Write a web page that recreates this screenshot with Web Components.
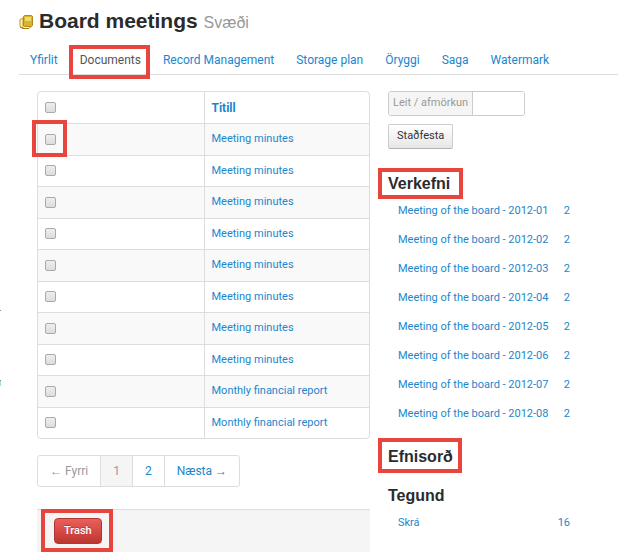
<!DOCTYPE html>
<html lang="is">
<head>
<meta charset="utf-8">
<title>Board meetings</title>
<style>
    body {
        margin: 0;
        background: #fff;
        color: #333;
        font: 11px/18px Roboto, "Liberation Sans", sans-serif;
        --link: #1c86cc;
        --line: #ddd;
        --mark: #e9453f;
        --heading: "Liberation Sans", Arial, sans-serif;
    }
</style>
</head>
<body>
<area-page>
    <page-heading slot="heading" kind="Svæði">Board meetings</page-heading>
    <tab-bar slot="tabs"></tab-bar>
    <document-table></document-table>
    <page-nav></page-nav>
    <action-bar></action-bar>
    <filter-form slot="side"></filter-form>
    <facet-list slot="side" id="tasks"><mark-box>Verkefni</mark-box></facet-list>
    <facet-list slot="side" id="keywords"><mark-box>Efnisorð</mark-box></facet-list>
    <facet-list slot="side" id="types">Tegund</facet-list>
</area-page>

<style>
    #tasks mark-box {
        --reach: -6px -13px -5px -10px;
    }
    #keywords mark-box {
        --reach: -9px -9px -6px -10px;
    }
</style>

<script>
/*
    Page frame: heading, tabs, main column and side column
 */
class AreaPage extends HTMLElement {
    constructor() {
        super();
        this.attachShadow({mode: "open"});
        this.shadowRoot.innerHTML = `
            <header>
                <slot name="heading"></slot>
                <slot name="tabs"></slot>
            </header>
            <div class="columns">
                <main><slot></slot></main>
                <aside><slot name="side"></slot></aside>
            </div>
            <div class="rail"><i></i><i></i></div>

            <style>
                :host {
                    display: block;
                    position: relative;
                    padding: 8px 0 6px;
                }
                header {
                    margin-left: 19px;
                }
                .columns {
                    display: grid;
                    grid-template-columns: minmax(0, 333fr) minmax(0, 230fr);
                    gap: 18px;
                    margin: 16px 0 0 37px;
                }
                /* what still shows of the folded menu at the window edge */
                .rail {
                    position: absolute;
                    left: 0;
                    top: 310px;
                    display: grid;
                    gap: 69px;
                }
                .rail i {
                    width: 1px;
                    height: 1px;
                    background: #7e93b5;
                }
                .rail i + i {
                    height: 5px;
                    background: #a5dcee;
                    border-top: 1px solid #888;
                }
            </style>
        `;
    }
}

/*
    Red frame drawn over the slotted content
 */
class MarkBox extends HTMLElement {
    constructor() {
        super();
        this.attachShadow({mode: "open"});
        this.shadowRoot.innerHTML = `
            <slot></slot>
            <style>
                :host {
                    display: inline-block;
                    position: relative;
                }
                :host::after {
                    content: "";
                    position: absolute;
                    inset: var(--reach, -6px);
                    border: 4px solid var(--mark);
                    pointer-events: none;
                    z-index: 1;
                }
            </style>
        `;
    }
}

class PageHeading extends HTMLElement {
    constructor() {
        super();
        this.attachShadow({mode: "open"});
        this.shadowRoot.innerHTML = `
            <svg width="15" height="16" viewBox="0 0 15 16" aria-hidden="true">
                <path d="M4 4L1 5.500v7l3 1.500z" fill="#fbf3c8" stroke="#c09a1c"/>
                <path d="M4.500 2.500l1-1h7l1 1v9l-1 1h-7l-1-1z" fill="#d8b42c" stroke="#b08a14"/>
                <path d="M6 3h6v4H6z" fill="#efda70"/>
                <path d="M1 13l3 1.500h6l1.500-1.500" fill="none" stroke="#a07a0c"/>
            </svg>
            <h1><slot></slot> <small></small></h1>

            <style>
                :host {
                    display: flex;
                    align-items: center;
                    gap: 5px;
                    font-family: var(--heading);
                }
                h1 {
                    margin: 0;
                    font-size: 21px;
                    line-height: 26px;
                    color: #2b2b2b;
                }
                small {
                    font-size: 16px;
                    font-weight: normal;
                    color: #999;
                }
            </style>
        `;
    }

    connectedCallback() {
        this.shadowRoot.querySelector('small').textContent = this.getAttribute('kind');
    }
}

class TabBar extends HTMLElement {
    constructor() {
        super();
        this.attachShadow({mode: "open"});
        this.shadowRoot.innerHTML = `
            <nav>
                <a href="#">Yfirlit</a>
                <mark-box><a href="#" class="active" aria-current="page">Documents</a></mark-box>
                <a href="#">Record Management</a>
                <a href="#">Storage plan</a>
                <a href="#">Öryggi</a>
                <a href="#">Saga</a>
                <a href="#">Watermark</a>
            </nav>

            <style>
                :host {
                    display: block;
                    margin-top: 15px;
                    border-bottom: 1px solid var(--line);
                    font-size: 12px;
                }
                nav {
                    display: flex;
                    padding: 0 11px 5px;
                    gap: 22px;
                }
                a {
                    color: var(--link);
                    text-decoration: none;
                    white-space: nowrap;
                }
                .active {
                    color: #555;
                }
                mark-box {
                    --reach: -6px -9px -10px -11px;
                }
            </style>
        `;
    }
}

class DocumentTable extends HTMLElement {
    constructor() {
        super();
        this.attachShadow({mode: "open"});
        this.titles = [
            ...Array(8).fill('Meeting minutes'),
            ...Array(2).fill('Monthly financial report')
        ];
        this.shadowRoot.innerHTML = `
            <table>
                <thead>
                    <tr>
                        <th><input type="checkbox" aria-labelledby="title"></th>
                        <th><a href="#" id="title">Titill</a></th>
                    </tr>
                </thead>
                <tbody>${this.titles.map((title, i) => this._row(title, i)).join('')}</tbody>
            </table>

            <style>
                :host {
                    display: block;
                }
                table {
                    width: 100%;
                    height: 348px;
                    table-layout: fixed;
                    box-sizing: border-box;
                    border: 1px solid var(--line);
                    border-radius: 4px;
                    border-spacing: 0;
                }
                th, td {
                    padding: 0 7px;
                    text-align: left;
                    vertical-align: middle;
                }
                th {
                    height: 31px;
                    font-size: 12px;
                }
                td {
                    border-top: 1px solid var(--line);
                }
                th + th, td + td {
                    border-left: 1px solid var(--line);
                }
                tbody tr:nth-child(odd) {
                    background: #f9f9f9;
                }
                a {
                    color: var(--link);
                    text-decoration: none;
                }
                input {
                    appearance: none;
                    display: block;
                    box-sizing: border-box;
                    width: 11px;
                    height: 11px;
                    margin: 0;
                    border: 1px solid #aaa;
                    border-radius: 2px;
                    background: linear-gradient(#eee, #ddd);
                }
                mark-box {
                    display: block;
                    width: 11px;
                    --reach: -14px -11px -12px -13px;
                }
            </style>
        `;
    }

    _row(title, i) {
        const box = `<input type="checkbox" aria-labelledby="doc${i}">`;
        return `
            <tr>
                <td>${i === 0 ? `<mark-box>${box}</mark-box>` : box}</td>
                <td><a href="#" id="doc${i}">${title}</a></td>
            </tr>
        `;
    }
}

class PageNav extends HTMLElement {
    constructor() {
        super();
        this.attachShadow({mode: "open"});
        this.shadowRoot.innerHTML = `
            <nav>
                <span>← Fyrri</span>
                <span class="current">1</span>
                <a href="#">2</a>
                <a href="#">Næsta →</a>
            </nav>

            <style>
                :host {
                    display: block;
                    margin-top: 16px;
                    font-size: 12px;
                }
                nav {
                    display: inline-flex;
                    vertical-align: top;
                    border: 1px solid var(--line);
                    border-radius: 3px;
                    line-height: 30px;
                }
                nav > * {
                    padding: 0 12px;
                    color: #999;
                    text-decoration: none;
                }
                nav > * + * {
                    border-left: 1px solid var(--line);
                }
                nav > a {
                    color: var(--link);
                }
                .current {
                    background: #f5f5f5;
                }
            </style>
        `;
    }
}

class ActionBar extends HTMLElement {
    constructor() {
        super();
        this.attachShadow({mode: "open"});
        this.shadowRoot.innerHTML = `
            <mark-box><button type="button">Trash</button></mark-box>

            <style>
                :host {
                    display: flex;
                    margin-top: 22px;
                    padding: 8px 17px;
                    background: #f5f5f5;
                    border-top: 1px solid var(--line);
                }
                button {
                    display: block;
                    padding: 3px 9px;
                    border: 1px solid #b33630;
                    border-radius: 4px;
                    background: linear-gradient(#ec5f5b, #bd362f);
                    color: #fff;
                    font: inherit;
                    font-weight: 500;
                    text-shadow: 0 -1px 0 rgba(0, 0, 0, 0.25);
                }
                mark-box {
                    --reach: -9px -11px -8px -13px;
                }
            </style>
        `;
    }
}

class FilterForm extends HTMLElement {
    constructor() {
        super();
        this.attachShadow({mode: "open"});
        this.shadowRoot.innerHTML = `
            <form>
                <div class="field">
                    <label for="query">Leit / afmörkun</label>
                    <input type="text" id="query">
                </div>
                <button type="button">Staðfesta</button>
            </form>

            <style>
                :host {
                    display: block;
                    padding-bottom: 6px;
                }
                form {
                    display: grid;
                    justify-items: start;
                    gap: 8px;
                }
                .field {
                    display: flex;
                    border: 1px solid #ccc;
                    border-radius: 3px;
                    overflow: hidden;
                }
                label {
                    padding: 2px 4px 3px;
                    background: #f5f5f5;
                    border-right: 1px solid #ccc;
                    color: #999;
                }
                input {
                    width: 51px;
                    box-sizing: border-box;
                    border: 0;
                    padding: 0 4px;
                    font: inherit;
                }
                button {
                    padding: 2px 8px 3px;
                    border: 1px solid #ccc;
                    border-bottom-color: #b3b3b3;
                    border-radius: 2px;
                    background: linear-gradient(#fff, #e6e6e6);
                    color: #333;
                    font: inherit;
                }
            </style>
        `;
    }
}

/*
    Heading with counted links, links are set through items
 */
class FacetList extends HTMLElement {
    constructor() {
        super();
        this.attachShadow({mode: "open"});
        this.shadowRoot.innerHTML = `
            <h2><slot></slot></h2>
            <ul hidden></ul>

            <style>
                :host {
                    display: block;
                    margin-top: 19px;
                }
                h2 {
                    margin: 0;
                    font: bold 16px/20px var(--heading);
                    color: #2b2b2b;
                }
                ul {
                    margin: 0;
                    padding: 2px 0 0 10px;
                    list-style: none;
                }
                a {
                    display: flex;
                    justify-content: space-between;
                    max-width: 172px;
                    line-height: 29px;
                    color: var(--link);
                    text-decoration: none;
                    white-space: nowrap;
                }
            </style>
        `;
    }

    set items(items) {
        const list = this.shadowRoot.querySelector('ul');
        list.hidden = false;
        list.innerHTML = items.map(([name, count]) =>
            `<li><a href="#"><span>${name}</span><span>${count}</span></a></li>`
        ).join('');
    }
}

customElements.define('area-page', AreaPage);
customElements.define('mark-box', MarkBox);
customElements.define('page-heading', PageHeading);
customElements.define('tab-bar', TabBar);
customElements.define('document-table', DocumentTable);
customElements.define('page-nav', PageNav);
customElements.define('action-bar', ActionBar);
customElements.define('filter-form', FilterForm);
customElements.define('facet-list', FacetList);

document.querySelector('#tasks').items =
    [1, 2, 3, 4, 5, 6, 7, 8].map(n => [`Meeting of the board - 2012-0${n}`, 2]);
document.querySelector('#types').items = [['Skrá', 16]];
</script>
</body>
</html>
